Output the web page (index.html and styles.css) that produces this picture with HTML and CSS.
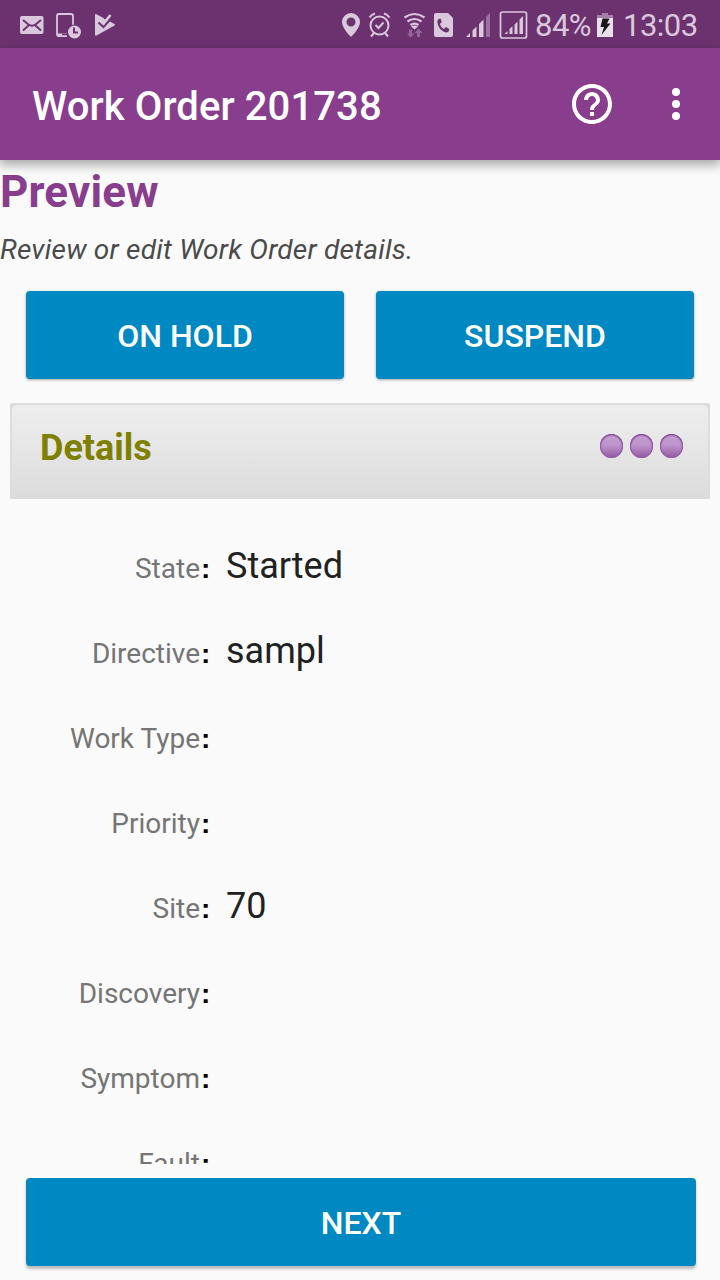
FILE: index.html
```html
<!DOCTYPE html>
<html lang="en">
<head>
<meta charset="utf-8">
<title>Work Order 201738</title>
<link rel="stylesheet" href="styles.css">
</head>
<body>
<div class="status">
  <svg class="glyph" width="50" height="48" viewBox="0 0 50 48"><rect x="20" y="16" width="23.500" height="18" rx="2" fill="#dac8dc"/><path d="M23 20l5.500 4.500q3.500 2.500 7 0L41 20M23 30.500l5.500-5M41 30.500l-5.500-5" fill="none" stroke="#6c3270" stroke-width="1.900"/></svg>
  <svg class="glyph" width="38" height="48" viewBox="50 0 38 48"><path d="M73 25V16q0-2-2-2H59q-2 0-2 2v18q0 2 2 2h8" fill="none" stroke="#dac8dc" stroke-width="1.800"/><path d="M57 33.500h10V37h-8q-2 0-2-2z" fill="#dac8dc"/><path d="M62 34.500h5" stroke="#6c3270" stroke-width="1.500"/><circle cx="74.500" cy="32" r="7.500" fill="#6c3270"/><circle cx="74.500" cy="32" r="6.500" fill="#dac8dc"/><path d="M74 27.500V32.500h4" fill="none" stroke="#6c3270" stroke-width="2"/></svg>
  <svg class="glyph" width="32" height="48" viewBox="88 0 32 48"><path d="M95 15q0-1.500 1.500-.8L114.500 24q1 .8 0 1.500L96.500 35.500Q95 36.200 95 34.500z" fill="#dac8dc"/><path d="M103.500 19L108 13.500h4L111 20z" fill="#6c3270"/><path d="M98.500 22.500l5 4.500 7.500-8.500" fill="none" stroke="#6c3270" stroke-width="2.200"/><path d="M100 20l3.600 3.600L110.500 15" fill="none" stroke="#dac8dc" stroke-width="2.600"/></svg>
  <svg class="glyph status-end" width="31" height="48" viewBox="335 0 31 48"><path fill-rule="evenodd" d="M351 13a9 9 0 0 0-9 9c0 6.500 9 15 9 15s9-8.500 9-15a9 9 0 0 0-9-9zm0 4.500a4.500 4.500 0 1 1 0 9 4.500 4.500 0 0 1 0-9z" fill="#dac8dc"/></svg>
  <svg class="glyph" width="34" height="48" viewBox="366 0 34 48"><g fill="none" stroke="#dac8dc" stroke-width="2"><circle cx="379.500" cy="25.500" r="9"/><path d="M375.500 25l3 3 5-5.500M374 33l-3 3.500M385 33l3 3.500M369.500 17.500q2-3 5.500-4M389.500 17.500q-2-3-5.500-4"/></g></svg>
  <svg class="glyph" width="30" height="48" viewBox="400 0 30 48"><g fill="none" stroke="#dac8dc" stroke-width="2.200"><path d="M404.500 17.500q10-7 20 0M407.500 21.500q7-5 14 0M410.500 25q4-2.800 8 0"/></g><path d="M411 26.500q3.500-2 7 0l-3.500 3z" fill="#dac8dc"/><path d="M409 29.500h3v4h2.500L410.500 37.500 407 33.500h2zM417 37h3v-4h2.500l-4-4.500-4 4.500h2.500z" fill="#94659a"/></svg>
  <svg class="glyph" width="30" height="48" viewBox="430 0 30 48"><path d="M436 13h12l5 5v17q0 2-2 2H436q-2 0-2-2V15q0-2 2-2z" fill="#dac8dc"/><path d="M437.500 20.500q.5-2 3-2l1.300 3.500-2 2q1 3.500 4 5l2.200-2 3.200 2q0 3-2.500 3.500C440 31.500 437 25 437.500 20.500z" fill="#6c3270"/></svg>
  <svg class="glyph" width="36" height="48" viewBox="460 0 36 48"><path d="M466 37l4-4v4zM472.500 30.500l4-4V37h-4zM479 24l4.500-4.500V37H479z" fill="#dac8dc"/><path d="M486 17l4-4v24h-4z" fill="#9b709f"/></svg>
  <svg class="glyph" width="39" height="48" viewBox="496 0 39 48"><rect x="500.500" y="12" width="26" height="26" rx="2" fill="none" stroke="#dac8dc" stroke-width="1.700"/><path d="M504.500 34l3-3v3zM509.500 29l3-2.800V34h-3zM514.500 24.500l3-2.800V34h-3zM519.500 19.500l3.500-3.500V34h-3.500z" fill="#dac8dc"/></svg>
  <span class="percent">84%</span>
  <svg class="glyph" width="16" height="48" viewBox="597 0 16 48"><path d="M597 15h5v-2h6v2h5v3h-16z" fill="#a57ea9"/><path d="M597 18h16v19h-16z" fill="#eadfeb"/><path d="M602.500 18.500h7l-2.500 5h3.500L601.500 35l2.500-8h-3.500z" fill="#1b151b"/></svg>
  <span class="clock">13:03</span>
</div>
<header class="appbar">
  <h1 class="title">Work Order 201738</h1>
  <svg class="help" width="48" height="48" viewBox="0 0 24 24" fill="#fff"><path d="M11 18h2v-2h-2v2zm1-16C6.480 2 2 6.480 2 12s4.480 10 10 10 10-4.480 10-10S17.520 2 12 2zm0 18c-4.410 0-8-3.590-8-8s3.590-8 8-8 8 3.590 8 8-3.590 8-8 8zm0-14c-2.210 0-4 1.790-4 4h2c0-1.100.9-2 2-2s2 .9 2 2c0 2-3 1.750-3 5h2c0-2.250 3-2.500 3-5 0-2.210-1.790-4-4-4z"/></svg>
  <svg width="48" height="48" viewBox="0 0 24 24" fill="#fff"><circle cx="12" cy="6" r="2"/><circle cx="12" cy="12" r="2"/><circle cx="12" cy="18" r="2"/></svg>
</header>
<main class="content">
  <h2 class="heading">Preview</h2>
  <p class="hint">Review or edit Work Order details.</p>
  <div class="actions">
    <button class="btn">ON HOLD</button>
    <button class="btn">SUSPEND</button>
  </div>
  <section class="panel">
    <div class="panel-face">
      <h3 class="panel-title">Details</h3>
      <div class="dots"><i class="dot"></i><i class="dot"></i><i class="dot"></i></div>
    </div>
  </section>
  <div class="fields">
    <div class="row"><span class="label">State</span><span class="colon">:</span><span class="value">Started</span></div>
    <div class="row"><span class="label">Directive</span><span class="colon">:</span><span class="value">sampl</span></div>
    <div class="row"><span class="label">Work Type</span><span class="colon">:</span><span class="value"></span></div>
    <div class="row"><span class="label">Priority</span><span class="colon">:</span><span class="value"></span></div>
    <div class="row"><span class="label">Site</span><span class="colon">:</span><span class="value">70</span></div>
    <div class="row"><span class="label">Discovery</span><span class="colon">:</span><span class="value"></span></div>
    <div class="row"><span class="label">Symptom</span><span class="colon">:</span><span class="value"></span></div>
    <div class="row"><span class="label">Fault</span><span class="colon">:</span><span class="value"></span></div>
  </div>
</main>
<footer class="footer"><button class="btn next">NEXT</button></footer>
</body>
</html>
```
FILE: styles.css
```css
* { box-sizing: border-box; }
body {
  margin: 0;
  width: 720px;
  height: 1280px;
  overflow: hidden;
  display: flex;
  flex-direction: column;
  background: #fafafa;
  font-family: Roboto, "Liberation Sans", sans-serif;
}
h1, h2, h3, p { margin: 0; }
.status {
  height: 48px;
  flex: none;
  display: flex;
  background: #6c3270;
  color: #dac8dc;
  font-size: 31px;
  line-height: 51px;
  letter-spacing: -.5px;
  white-space: nowrap;
}
.glyph { flex: none; display: block; }
.status-end { margin-left: 215px; }
.percent { width: 62px; }
.clock { margin-left: 10px; }
.appbar {
  height: 112px;
  flex: none;
  display: flex;
  align-items: center;
  padding: 0 20px 0 32px;
  background: #883e8c;
  box-shadow: 0 4px 10px 1px rgba(0, 0, 0, .33);
  position: relative;
}
.title {
  flex: 1;
  padding-top: 6px;
  color: #fff;
  font-size: 40px;
  font-weight: 500;
  line-height: 48px;
  letter-spacing: .1px;
}
.help { margin-right: 36px; }
.content {
  height: 1004px;
  flex: none;
  overflow: hidden;
  padding-top: 6px;
}
.heading {
  color: #883e8c;
  font-size: 44px;
  font-weight: 700;
  line-height: 52px;
  letter-spacing: .15px;
}
.hint {
  margin-top: 15px;
  color: #4a4a4a;
  font-size: 28px;
  font-style: italic;
  line-height: 34px;
  letter-spacing: .21px;
}
.actions {
  display: flex;
  gap: 32px;
  padding: 24px 26px 0;
}
.btn {
  flex: 1;
  height: 88px;
  padding: 2px 0 0;
  border: 0;
  border-radius: 4px;
  background: #0088c3;
  box-shadow: 0 1px 3px rgba(0, 0, 0, .35);
  color: #fff;
  font: 500 32px Roboto, "Liberation Sans", sans-serif;
}
.next { box-shadow: 0 3px 3px rgba(0, 0, 0, .25); }
.panel {
  height: 96px;
  margin: 24px 10px 0;
  padding: 2px 2px 0;
  border-radius: 2px 2px 0 0;
  background: #dcdcdc;
}
.panel-face {
  height: 94px;
  display: flex;
  justify-content: space-between;
  padding: 22px 25px 0 28px;
  border-radius: 5px;
  background: linear-gradient(#eee, #dcdcdc);
}
.panel-title {
  color: #808000;
  font-size: 36px;
  font-weight: 700;
  line-height: 42px;
}
.dots { display: flex; gap: 7px; padding-top: 7px; }
.dot {
  width: 23px;
  height: 24px;
  border-radius: 50%;
  background: linear-gradient(#c4a0d0, #bd94cc 45%, #b386c1 60%, #9356a0);
  box-shadow: inset 0 1px 2px #7f3b91, inset 0 0 1px 1px #9a62a8;
}
.fields { padding-top: 25px; }
.row {
  height: 85px;
  display: flex;
  align-items: baseline;
  line-height: 84px;
}
.label {
  width: 200px;
  text-align: right;
  color: #757575;
  font-size: 28px;
}
.colon {
  width: 26px;
  padding-left: 1px;
  color: #000;
  font-family: "Liberation Sans", Arial, sans-serif;
  font-size: 28px;
  font-weight: 700;
}
.value {
  color: #212121;
  font-size: 36px;
}
.value::after { content: "\200b"; }
.footer {
  display: flex;
  padding: 14px 24px 0 26px;
}
```
